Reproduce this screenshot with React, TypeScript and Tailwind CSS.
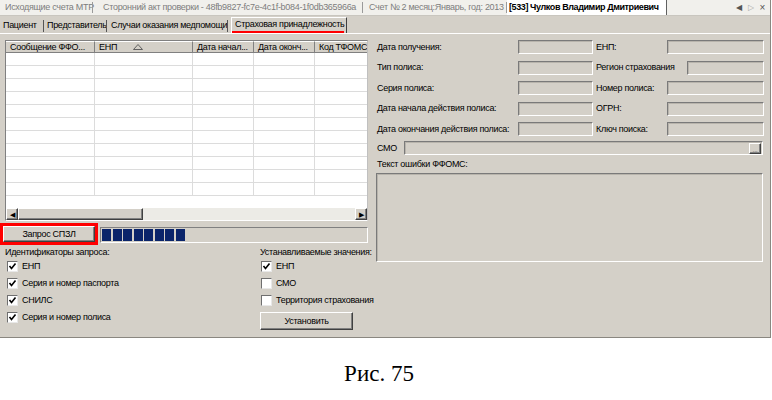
import React from "react";

function Sunken({ className = "" }: { className?: string }) {
	return (
		<div
			className={`border border-t-[#7a7a7a] border-l-[#7a7a7a] border-b-white border-r-white shadow-[inset_1px_1px_0_#b8b4ac] bg-[#d4d0c8] ${className}`}
		/>
	);
}

function Raised({ children, className = "" }: { children?: React.ReactNode; className?: string }) {
	return (
		<div
			className={`flex items-center justify-center border border-t-white border-l-white border-b-[#404040] border-r-[#404040] shadow-[inset_-1px_-1px_0_#808080] bg-[#d4d0c8] ${className}`}
		>
			{children}
		</div>
	);
}

function Check({ checked, label }: { checked?: boolean; label: string }) {
	return (
		<div className="h-[17px] flex items-center whitespace-nowrap">
			<div className="w-[11px] h-[11px] ml-[2px] bg-white border border-t-[#6f6f6f] border-l-[#6f6f6f] border-b-[#e8e8e8] border-r-[#e8e8e8] flex items-center justify-center">
				{checked && (
					<svg width="9" height="9" viewBox="0 0 9 9">
						<polyline points="1.5,4 3.5,6.5 7.5,1.5" fill="none" stroke="#000" strokeWidth="1.6" />
					</svg>
				)}
			</div>
			<span className="ml-[4px]">{label}</span>
		</div>
	);
}

const rows = [
	["Дата получения:", "ЕНП:", 71, 97],
	["Тип полиса:", "Регион страхования", 91, 77],
	["Серия полиса:", "Номер полиса:", 71, 97],
	["Дата начала действия полиса:", "ОГРН:", 71, 97],
	["Дата окончания действия полиса:", "Ключ поиска:", 71, 97],
] as const;

const cols = [89, 98, 61, 61, 60];

export default function App() {
	return (
		<div className="w-[772px] h-[400px] bg-white font-['Liberation_Sans',Arial,sans-serif] text-[9px] tracking-[-0.3px] text-black leading-none">
			<div className="w-[771px] h-[338px] bg-[#d4d0c8] border-r border-b border-[#8a8780] flex flex-col overflow-hidden">
				{/* document tabs */}
				<div className="h-[16px] shrink-0 bg-[#f1f0ec] border-b border-[#c9c6bf] flex items-center text-[#7d7d7d] whitespace-nowrap">
					<span className="pl-[5px] w-[92px] shrink-0">Исходящие счета МТР</span>
					<span className="w-px h-[11px] bg-[#9a9a9a]" />
					<span className="pl-[10px] w-[269px] overflow-hidden">Сторонний акт проверки - 48fb9827-fc7e-4c1f-b084-1f0db365966a</span>
					<span className="w-px h-[11px] bg-[#9a9a9a]" />
					<span className="pl-[6px] w-[143px] overflow-hidden">Счет № 2 месяц:Январь, год: 2013</span>
					<span className="w-px h-[11px] bg-[#9a9a9a]" />
					<div className="h-full w-[160px] bg-white border-r border-[#606060] flex items-center pl-[2px] font-bold text-black tracking-[-0.4px] overflow-hidden">
						[533] Чулков Владимир Дмитриевич
					</div>
					<div className="ml-auto flex items-center gap-[6px] pr-[5px] text-[8px] text-[#555]">
						<span>◀</span>
						<span className="text-[#aaa]">▷</span>
						<span className="text-[10px]">×</span>
					</div>
				</div>

				{/* page tabs */}
				<div className="h-[18px] shrink-0 flex items-end border-b border-white whitespace-nowrap">
					<div className="h-[15px] flex items-center">
						<span className="pl-[3px] w-[43px]">Пациент</span>
						<span className="w-px h-[12px] bg-[#555]" />
						<span className="pl-[3px] w-[62px]">Представитель</span>
						<span className="w-px h-[12px] bg-[#555]" />
						<span className="pl-[4px] w-[120px]">Случаи оказания медпомощи</span>
						<span className="w-px h-[12px] bg-[#555]" />
					</div>
					<div className="ml-[3px] h-[16px] w-[116px] flex flex-col border-t border-l border-white border-r border-r-[#404040]">
						<span className="flex-1 flex items-center pl-[3px]">Страховая принадлежность</span>
						<span className="h-[2px] mr-[2px] bg-[#ff0000]" />
					</div>
				</div>

				{/* content */}
				<div className="flex flex-1">
					{/* left */}
					<div className="w-[370px] shrink-0 flex flex-col pt-[6px]">
						<div className="ml-[5px] w-[363px] h-[181px] border border-t-[#808080] border-l-[#808080] border-b-white border-r-[#c0c0c0] bg-white flex flex-col overflow-hidden">
							<div className="h-[12px] shrink-0 flex bg-[#d4d0c8] whitespace-nowrap">
								{[
									"Сообщение ФФО...",
									"ЕНП",
									"Дата начал...",
									"Дата оконч...",
									"Код ТФОМС",
								].map((t, i) => (
									<div
										key={i}
										className="shrink-0 h-full flex items-center pl-[4px] border-r border-b border-[#808080] border-t border-t-white overflow-hidden"
										style={{ width: cols[i] }}
									>
										{t}
										{i === 1 && (
											<svg className="ml-[16px]" width="10" height="6" viewBox="0 0 10 6">
												<polygon points="5,0.5 9.5,5.5 0.5,5.5" fill="none" stroke="#555" strokeWidth="0.9" />
											</svg>
										)}
									</div>
								))}
							</div>
							<div className="flex-1 flex flex-col">
								{Array.from({ length: 11 }).map((_, r) => (
									<div key={r} className="h-[13px] shrink-0 flex border-b border-[#dcdcdc]">
										{cols.map((w, c) => (
											<div key={c} className="shrink-0 h-full border-r border-[#dcdcdc]" style={{ width: w }} />
										))}
									</div>
								))}
							</div>
							<div className="h-[12px] shrink-0 flex bg-[#ecebe6]">
								<Raised className="w-[12px] h-full text-[7px]">◀</Raised>
								<Raised className="w-[125px] h-full" />
								<div className="flex-1" />
								<Raised className="w-[12px] h-full text-[7px]">▶</Raised>
							</div>
						</div>

						<div className="mt-[2px] flex items-start">
							<div className="w-[98px] h-[22px] border-[3px] border-[#ff0000]">
								<Raised className="w-full h-full">Запрос СПЗЛ</Raised>
							</div>
							<div className="ml-[2px] mt-[4px] w-[268px] h-[16px] border border-t-[#808080] border-l-[#808080] border-b-white border-r-white flex items-center gap-[1.5px] pl-[1px]">
								{Array.from({ length: 8 }).map((_, i) => (
									<div key={i} className="w-[9px] h-[12px] bg-[#0a246a]" />
								))}
							</div>
						</div>

						<div className="mt-[2px] flex">
							<div className="w-[259px] shrink-0 pl-[5px] flex flex-col">
								<div className="h-[11px] flex items-center whitespace-nowrap">Идентификаторы запроса:</div>
								<Check checked label="ЕНП" />
								<Check checked label="Серия и номер паспорта" />
								<Check checked label="СНИЛС" />
								<Check checked label="Серия и номер полиса" />
							</div>
							<div className="flex flex-col">
								<div className="h-[11px] flex items-center pl-[1px] whitespace-nowrap">Устанавливаемые значения:</div>
								<Check checked label="ЕНП" />
								<Check label="СМО" />
								<Check label="Территория страхования" />
								<Raised className="mt-[3px] ml-[1px] w-[93px] h-[18px]">Установить</Raised>
							</div>
						</div>
					</div>

					{/* right */}
					<div className="flex-1 flex flex-col pl-[7px] pt-[3px]">
						{rows.map(([l1, l2, lw2, iw2], i) => (
							<div key={i} className="h-[20.5px] flex items-center">
								<span className="w-[141px] shrink-0 whitespace-nowrap">{l1}</span>
								<Sunken className="h-[14px] w-[75px] shrink-0" />
								<span className="ml-[3px] shrink-0 whitespace-nowrap" style={{ width: lw2 }}>
									{l2}
								</span>
								<Sunken className={iw2 === 77 ? "h-[14px] w-[77px] shrink-0" : "h-[14px] w-[97px] shrink-0"} />
							</div>
						))}
						<div className="h-[17px] flex items-center">
							<span className="w-[27px] shrink-0">СМО</span>
							<div className="w-[359px] h-[14px] border border-t-[#7a7a7a] border-l-[#7a7a7a] border-b-white border-r-white shadow-[inset_1px_1px_0_#b8b4ac] flex justify-end items-center pr-[1px]">
								<Raised className="w-[12px] h-[11px] text-[7px] text-[#777] items-end">...</Raised>
							</div>
						</div>
						<div className="h-[16px] flex items-center">Текст ошибки ФФОМС:</div>
						<Sunken className="-ml-[1px] w-[387px] h-[89px]" />
					</div>
				</div>
			</div>

			<div className="h-[62px] flex items-center justify-center font-['Liberation_Serif',serif] text-[23px] tracking-normal pr-[14px] pt-[8px]">
				Рис. 75
			</div>
		</div>
	);
}
